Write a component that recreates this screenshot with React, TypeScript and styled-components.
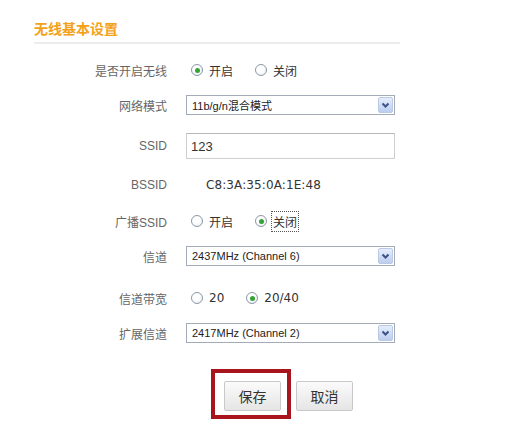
import React from "react";
import styled, { createGlobalStyle } from "styled-components";

const GlobalStyle = createGlobalStyle`
  html, body { margin: 0; padding: 0; background: #ffffff; }
  body { font-family: "Liberation Sans", "Noto Sans CJK SC", sans-serif; }
`;

const CJK = `"Liberation Sans", "Noto Sans CJK SC", sans-serif`;

const Page = styled.div`
  width: 366px;
  padding: 21px 0 0 34px;
`;

const Title = styled.h2`
  margin: 0;
  font-family: "Noto Sans CJK SC", sans-serif;
  font-weight: 700;
  font-size: 14px;
  line-height: 15px;
  color: #f4a11a;
`;

const Divider = styled.div`
  margin-top: 6px;
  height: 2px;
  background: #ececec;
`;

const Form = styled.div`
  display: flex;
  flex-direction: column;
  margin-top: 16px;
`;

const Row = styled.div<{ $gap?: number; $h?: number }>`
  display: grid;
  grid-template-columns: 133px 209px;
  column-gap: 19px;
  align-items: center;
  height: ${(p) => p.$h ?? 20}px;
  margin-top: ${(p) => p.$gap ?? 0}px;
`;

const Label = styled.div`
  text-align: right;
  font-family: ${CJK};
  font-size: 12px;
  color: #666666;
  white-space: nowrap;
`;

const RadioGroup = styled.div`
  display: flex;
  align-items: center;
  gap: 22px;
  padding-left: 5px;
`;

const Option = styled.label`
  display: flex;
  align-items: center;
  gap: 6px;
  font-family: ${CJK};
  font-size: 12px;
  color: #333333;
`;

const NumText = styled.span`
  font-family: "DejaVu Sans", sans-serif;
  font-size: 12px;
  color: #333333;
`;

const Focused = styled.span`
  outline: 1px dotted #555;
  outline-offset: 1px;
`;

const Radio = styled.span<{ $on?: boolean }>`
  width: 12px;
  height: 12px;
  box-sizing: border-box;
  border-radius: 50%;
  border: 1px solid #8b98a8;
  background: radial-gradient(circle at 40% 35%, #ffffff 40%, #e4e8ee 100%);
  display: flex;
  align-items: center;
  justify-content: center;
  &::after {
    content: "";
    width: 5px;
    height: 5px;
    border-radius: 50%;
    background: ${(p) => (p.$on ? "#35a335" : "transparent")};
  }
`;

const SelectBox = styled.div`
  width: 209px;
  height: 20px;
  box-sizing: border-box;
  border: 1px solid #a3abb8;
  background: #ffffff;
  display: flex;
  align-items: center;
  justify-content: space-between;
`;

const SelectText = styled.span`
  padding-left: 5px;
  font-family: ${CJK};
  font-size: 11px;
  color: #222222;
  white-space: nowrap;
`;

const ArrowBtn = styled.span`
  width: 15px;
  height: 16px;
  margin-right: 1px;
  box-sizing: border-box;
  border: 1px solid #b9c9e6;
  border-radius: 2px;
  background: linear-gradient(#e6eefb, #bccdee);
  display: flex;
  align-items: center;
  justify-content: center;
`;

const TextInput = styled.input`
  width: 209px;
  height: 26px;
  box-sizing: border-box;
  border: 1px solid #cfcfcf;
  border-top-color: #b8b8b8;
  padding: 0 4px;
  font-family: "Liberation Sans", sans-serif;
  font-size: 13px;
  color: #333333;
  outline: none;
`;

const MacText = styled.span`
  padding-left: 20px;
  font-family: "DejaVu Sans", sans-serif;
  font-size: 12px;
  color: #333333;
  letter-spacing: 0.1px;
`;

const Buttons = styled.div`
  display: flex;
  align-items: flex-start;
  margin-top: 26px;
  padding-left: 177px;
`;

const Highlight = styled.div`
  border: 4px solid #a9151d;
  padding: 8px 6px 4px 9px;
`;

const Button = styled.button<{ $offset?: number }>`
  width: 57px;
  height: 30px;
  margin-top: ${(p) => p.$offset ?? 0}px;
  margin-left: ${(p) => (p.$offset ? 5 : 0)}px;
  box-sizing: border-box;
  border: 1px solid #c9c9c9;
  border-radius: 2px;
  background: linear-gradient(#fbfbfb, #e5e5e5);
  font-family: "Noto Sans CJK SC", sans-serif;
  font-size: 14px;
  color: #333333;
  padding: 0;
`;

const Chevron = () => (
  <svg width="9" height="7" viewBox="0 0 9 7">
    <path d="M1.5 1.5 L4.5 4.5 L7.5 1.5" fill="none" stroke="#3c5288" strokeWidth="2" />
  </svg>
);

const Select = ({ value }: { value: string }) => (
  <SelectBox>
    <SelectText>{value}</SelectText>
    <ArrowBtn>
      <Chevron />
    </ArrowBtn>
  </SelectBox>
);

export default function App() {
  return (
    <>
      <GlobalStyle />
      <Page>
        <Title>无线基本设置</Title>
        <Divider />
        <Form>
          <Row>
            <Label>是否开启无线</Label>
            <RadioGroup>
              <Option>
                <Radio $on />
                开启
              </Option>
              <Option>
                <Radio />
                关闭
              </Option>
            </RadioGroup>
          </Row>
          <Row $gap={15}>
            <Label>网络模式</Label>
            <Select value="11b/g/n混合模式" />
          </Row>
          <Row $gap={18} $h={26}>
            <Label>SSID</Label>
            <TextInput defaultValue="123" />
          </Row>
          <Row $gap={16}>
            <Label>BSSID</Label>
            <MacText>C8:3A:35:0A:1E:48</MacText>
          </Row>
          <Row $gap={16}>
            <Label>广播SSID</Label>
            <RadioGroup>
              <Option>
                <Radio />
                开启
              </Option>
              <Option>
                <Radio $on />
                <Focused>关闭</Focused>
              </Option>
            </RadioGroup>
          </Row>
          <Row $gap={15}>
            <Label>信道</Label>
            <Select value="2437MHz (Channel 6)" />
          </Row>
          <Row $gap={22}>
            <Label>信道带宽</Label>
            <RadioGroup>
              <Option>
                <Radio />
                <NumText>20</NumText>
              </Option>
              <Option>
                <Radio $on />
                <NumText>20/40</NumText>
              </Option>
            </RadioGroup>
          </Row>
          <Row $gap={15}>
            <Label>扩展信道</Label>
            <Select value="2417MHz (Channel 2)" />
          </Row>
        </Form>
        <Buttons>
          <Highlight>
            <Button>保存</Button>
          </Highlight>
          <Button $offset={12}>取消</Button>
        </Buttons>
      </Page>
    </>
  );
}
